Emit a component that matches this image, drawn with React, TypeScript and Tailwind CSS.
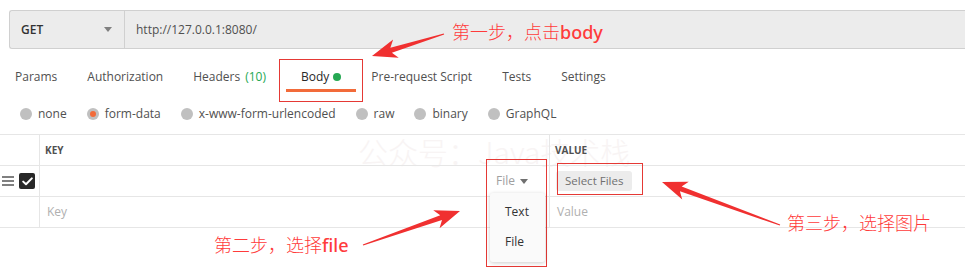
import React from "react";

type Pt = [number, number];

// tapered red arrow, thin at the tail, barbed head at the tip
const arrowPoints = (tail: Pt, tip: Pt, head = 20, wing = 9.5) => {
  const dx = tip[0] - tail[0];
  const dy = tip[1] - tail[1];
  const len = Math.hypot(dx, dy);
  const ux = dx / len;
  const uy = dy / len;
  const nx = -uy;
  const ny = ux;
  const neck: Pt = [tip[0] - ux * head, tip[1] - uy * head];
  const barb: Pt = [tip[0] - ux * (head + 5), tip[1] - uy * (head + 5)];
  const p = (b: Pt, w: number): string => `${b[0] + nx * w},${b[1] + ny * w}`;
  return [
    p(tail, 0.6),
    p(neck, 2.6),
    p(barb, wing),
    `${tip[0]},${tip[1]}`,
    p(barb, -wing),
    p(neck, -2.6),
    p(tail, -0.6),
  ].join(" ");
};

const tabs = [
  { label: "Params" },
  { label: "Authorization" },
  { label: "Headers", count: "(10)" },
  { label: "Body", dot: true, active: true },
  { label: "Pre-request Script" },
  { label: "Tests" },
  { label: "Settings" },
];

const modes = [
  { label: "none" },
  { label: "form-data", checked: true },
  { label: "x-www-form-urlencoded" },
  { label: "raw" },
  { label: "binary" },
  { label: "GraphQL" },
];

const Note = ({ cjk, latin }: { cjk: string; latin?: string }) => (
  <span className="whitespace-nowrap text-[18px] leading-none text-[#ff3b3b]">
    <span className="font-['Noto_Sans_CJK_SC',sans-serif] font-light">{cjk}</span>
    {latin && <span className="font-['Noto_Sans','Noto_Sans_CJK_SC',sans-serif] font-medium">{latin}</span>}
  </span>
);

export default function App() {
  return (
    <div className="relative w-[965px] h-[275px] overflow-hidden bg-white font-['Open_Sans',sans-serif] text-[12px] text-[#505050]">
      {/* request line */}
      <div className="pt-[10px] pl-[9px]">
        <div className="flex h-[39px] border border-r-0 border-[#d0d0d0] bg-[#ececec] rounded-l-[3px]">
          <div className="flex w-[115px] items-center justify-between border-r border-[#d0d0d0] pl-[11px] pr-[12px]">
            <span className="font-semibold text-[#333]">GET</span>
            <span className="h-0 w-0 border-x-[4px] border-t-[5px] border-x-transparent border-t-[#808080]" />
          </div>
          <div className="flex items-center pl-[11px] text-[#505050]">http://127.0.0.1:8080/</div>
        </div>
      </div>

      {/* tabs */}
      <div className="flex h-[46px] pt-[10px]">
        {tabs.map((t) => (
          <div key={t.label} className={`relative flex items-center px-[15px] ${t.active ? "ml-[5px]" : ""}`}>
            <span className={t.active ? "text-[#282828]" : "text-[#505050]"}>{t.label}</span>
            {t.count && <span className="ml-[5px] text-[#26a853]">{t.count}</span>}
            {t.dot && <span className="ml-[4px] h-[8px] w-[8px] rounded-full bg-[#26a853]" />}
            {t.active && <span className="absolute bottom-[3px] left-0 right-0 h-[3px] bg-[#f26b3a]" />}
          </div>
        ))}
      </div>

      {/* body modes */}
      <div className="flex h-[38px] items-center pl-[20px]">
        {modes.map((m) => (
          <div key={m.label} className="mr-[20px] flex items-center">
            <span className="flex h-[12px] w-[12px] items-center justify-center rounded-full bg-[#c0c0c0]">
              {m.checked && <span className="h-[6px] w-[6px] rounded-full bg-[#f26b3a]" />}
            </span>
            <span className="ml-[6px]">{m.label}</span>
          </div>
        ))}
      </div>

      {/* form-data table */}
      <div className="relative mt-[1px] border-t border-[#e6e6e6]">
        <div className="pointer-events-none absolute left-[358px] top-[1px] whitespace-nowrap font-['Noto_Sans_CJK_SC',sans-serif] text-[30px] font-light leading-none text-[#f8f4f4]">
          公众号：Java技术栈
        </div>
        <div className="relative grid grid-cols-[40px_510px_1fr]">
          <div className="h-[31px] border-b border-r border-[#e6e6e6]" />
          <div className="flex h-[31px] items-center border-b border-r border-[#e6e6e6] pl-[5px] text-[10px] font-bold text-[#505050]">
            KEY
          </div>
          <div className="flex h-[31px] items-center border-b border-[#e6e6e6] pl-[5px] text-[10px] font-bold text-[#505050]">
            VALUE
          </div>

          <div className="flex h-[31px] items-center gap-[5px] border-b border-r border-[#e6e6e6] pl-[2px]">
            <span className="flex w-[12px] flex-col gap-[2.5px]">
              <span className="h-[1.5px] bg-[#808080]" />
              <span className="h-[1.5px] bg-[#808080]" />
              <span className="h-[1.5px] bg-[#808080]" />
            </span>
            <span className="flex h-[16px] w-[16px] items-center justify-center rounded-[2px] bg-[#282828]">
              <svg width="11" height="9" viewBox="0 0 11 9" fill="none">
                <path d="M1.2 4.6 L4 7.3 L9.8 1.4" stroke="white" strokeWidth="2" strokeLinecap="round" strokeLinejoin="round" />
              </svg>
            </span>
          </div>
          <div className="relative flex h-[31px] items-center justify-end border-b border-r border-[#e6e6e6] pr-[21px]">
            <span className="text-[12px] text-[#a0a0a0]">File</span>
            <span className="ml-[5px] h-0 w-0 border-x-[4px] border-t-[5px] border-x-transparent border-t-[#707070]" />
            <div className="absolute right-[4px] top-[27px] z-10 flex h-[69px] w-[55px] flex-col rounded-[3px] bg-[#fafafa] pl-[15px] text-[12px] text-[#333] shadow-[0_1px_4px_rgba(0,0,0,0.2)]">
              <span className="pt-[10px]">Text</span>
              <span className="pt-[12px]">File</span>
            </div>
          </div>
          <div className="flex h-[31px] items-center border-b border-[#e6e6e6] pl-[6px]">
            <span className="flex h-[20px] items-center rounded-[3px] bg-[#ececec] px-[9px] text-[11.5px] text-[#707070]">
              Select Files
            </span>
          </div>

          <div className="h-[31px] border-b border-r border-[#e6e6e6]" />
          <div className="flex h-[31px] items-center border-b border-r border-[#e6e6e6] pl-[7px] text-[#b0b0b0]">Key</div>
          <div className="flex h-[31px] items-center border-b border-[#e6e6e6] pl-[7px] text-[#b0b0b0]">Value</div>
        </div>
      </div>

      {/* annotations drawn over the screenshot */}
      <div className="absolute left-[279px] top-[59px] h-[43px] w-[84px] border border-[#e53935]" />
      <div className="absolute left-[486px] top-[159px] h-[108px] w-[61px] border border-[#e53935]" />
      <div className="absolute left-[557px] top-[163px] h-[32px] w-[86px] border border-[#e53935]" />

      <div className="absolute left-[452px] top-[22px]">
        <Note cjk="第一步，点击" latin="body" />
      </div>
      <div className="absolute left-[214px] top-[235px]">
        <Note cjk="第二步，选择" latin="file" />
      </div>
      <div className="absolute left-[787px] top-[213px]">
        <Note cjk="第三步，选择图片" />
      </div>

      <svg className="pointer-events-none absolute left-0 top-0" width="965" height="275">
        <polygon points={arrowPoints([444, 34], [372, 56])} fill="#f03030" />
        <polygon points={arrowPoints([363, 245], [460, 211])} fill="#f03030" />
        <polygon points={arrowPoints([780, 225], [662, 182])} fill="#f03030" />
      </svg>
    </div>
  );
}
